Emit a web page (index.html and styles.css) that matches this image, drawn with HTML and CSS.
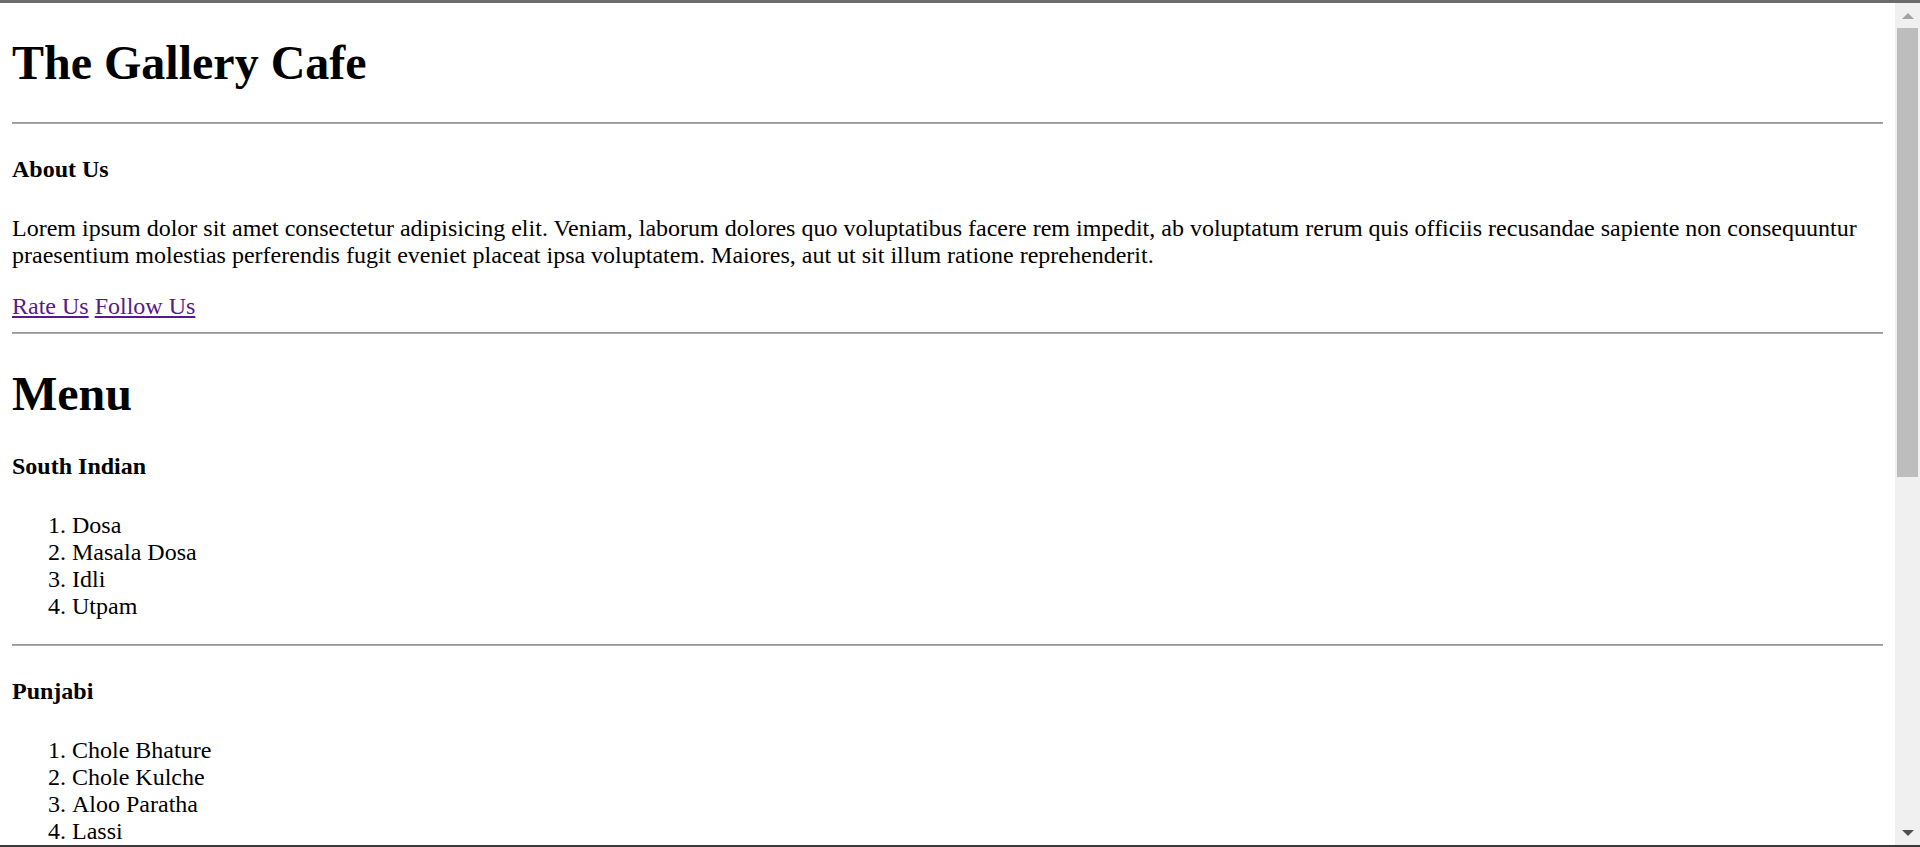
FILE: index.html
```html
<!DOCTYPE html>
<html lang="en">
<head>
<meta charset="utf-8">
<title>The Gallery Cafe</title>
<link rel="stylesheet" href="styles.css">
</head>
<body>
<div class="window">
  <main class="page">
    <h1 class="title">The Gallery Cafe</h1>
    <hr class="rule">
    <h4 class="subhead">About Us</h4>
    <p class="text">Lorem ipsum dolor sit amet consectetur adipisicing elit. Veniam, laborum dolores quo voluptatibus facere rem impedit, ab voluptatum rerum quis officiis recusandae sapiente non consequuntur praesentium molestias perferendis fugit eveniet placeat ipsa voluptatem. Maiores, aut ut sit illum ratione reprehenderit.</p>
    <div class="links"><a class="link" href="#rate">Rate Us</a> <a class="link" href="#follow">Follow Us</a></div>
    <hr class="rule">
    <h1 class="title">Menu</h1>
    <h4 class="subhead">South Indian</h4>
    <ol class="list">
      <li>Dosa</li>
      <li>Masala Dosa</li>
      <li>Idli</li>
      <li>Utpam</li>
    </ol>
    <hr class="rule">
    <h4 class="subhead">Punjabi</h4>
    <ol class="list">
      <li>Chole Bhature</li>
      <li>Chole Kulche</li>
      <li>Aloo Paratha</li>
      <li>Lassi</li>
    </ol>
    <hr class="rule">
    <h4 class="subhead">Chinese</h4>
    <ol class="list">
      <li>Noodles</li>
      <li>Manchurian</li>
      <li>Fried Rice</li>
      <li>Spring Roll</li>
    </ol>
  </main>
  <div class="scrollbar">
    <div class="sb-btn">
      <svg width="12" height="6" viewBox="0 0 12 6"><polygon points="0,6 6,0 12,6" fill="#a3a3a3"/></svg>
    </div>
    <div class="sb-track">
      <div class="sb-thumb"></div>
    </div>
    <div class="sb-btn">
      <svg width="12" height="6" viewBox="0 0 12 6"><polygon points="0,0 12,0 6,6" fill="#505050"/></svg>
    </div>
  </div>
</div>
</body>
</html>
```
FILE: styles.css
```css
html, body {
  margin: 0;
  padding: 0;
  background: #ffffff;
}

.window {
  box-sizing: border-box;
  height: 847px;
  display: flex;
  overflow: hidden;
  border-top: 3px solid #6c6c6c;
  border-bottom: 2px solid #3a3a3a;
  font-family: "Liberation Serif", "Times New Roman", serif;
  font-size: 24px;
  line-height: 27px;
  color: #000000;
}

.page {
  flex: 1;
  min-width: 0;
  padding: 0 12px;
  overflow: hidden;
}

.title {
  font-size: 48px;
  line-height: 55px;
  font-weight: bold;
  margin: 32.16px 0;
}

.subhead {
  font-size: 24px;
  line-height: 27px;
  font-weight: bold;
  margin: 31.92px 0;
}

.text {
  margin: 24px 0;
}

.links {
  margin: 0;
}

.link {
  color: #551a8b;
  text-decoration: underline;
}

.rule {
  height: 0;
  margin: 12px 0;
  border: none;
  border-top: 1px solid #9a9a9a;
  border-bottom: 1px solid #a9a9a9;
}

.list {
  margin: 24px 0;
  padding-left: 60px;
}

.scrollbar {
  width: 25px;
  flex: none;
  background: #f0f0f0;
  display: flex;
  flex-direction: column;
}

.sb-btn {
  height: 25px;
  flex: none;
  display: flex;
  align-items: center;
  justify-content: center;
}

.sb-track {
  flex: 1;
  padding: 0 2px;
}

.sb-thumb {
  height: 449px;
  background: #bdbdbd;
}
```
